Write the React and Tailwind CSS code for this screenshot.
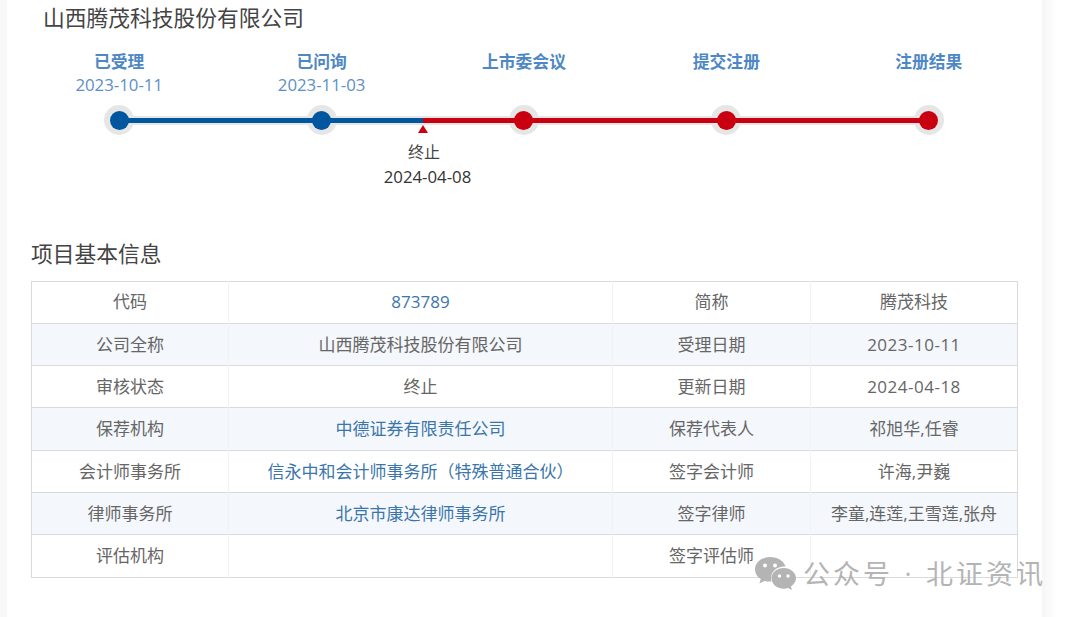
import React from "react";

const steps = [
  { label: "已受理", date: "2023-10-11", c: "bg-[#00569f]" },
  { label: "已问询", date: "2023-11-03", c: "bg-[#00569f]" },
  { label: "上市委会议", c: "bg-[#c90010]" },
  { label: "提交注册", c: "bg-[#c90010]" },
  { label: "注册结果", c: "bg-[#c90010]" },
];

const rows = [
  ["代码", "873789", "简称", "腾茂科技", true],
  ["公司全称", "山西腾茂科技股份有限公司", "受理日期", "2023-10-11", false],
  ["审核状态", "终止", "更新日期", "2024-04-18", false],
  ["保荐机构", "中德证券有限责任公司", "保荐代表人", "祁旭华,任睿", true],
  ["会计师事务所", "信永中和会计师事务所（特殊普通合伙）", "签字会计师", "许海,尹巍", true],
  ["律师事务所", "北京市康达律师事务所", "签字律师", "李童,连莲,王雪莲,张舟", true],
  ["评估机构", "", "签字评估师", "", false],
];

function WeChat() {
  return (
    <svg width="41" height="36" viewBox="0 0 41 36" className="shrink-0">
      <path fill="#b4b4b4" d="M15 1C7 1 0 6.500 0 13.400c0 4 2.200 7.200 5.800 9.700L4.400 27.500l5-2.600c1.800.4 3.300.7 5.600.7h1.500a11 11 0 0 1-.5-3.300c0-6.600 5.800-11.800 13-11.800h1.500C29 5 22.500 1 15 1z" />
      <path fill="#b4b4b4" d="M41 22.300c0-5.700-5.700-10.400-12.200-10.400-6.900 0-12.300 4.700-12.300 10.400 0 5.800 5.400 10.400 12.300 10.400 1.400 0 2.900-.4 4.300-.7l3.900 2.100-1.100-3.500c2.900-2.100 5.100-5 5.100-8.300z" />
      <circle cx="10" cy="9.500" r="2" fill="#fff" />
      <circle cx="20" cy="9.500" r="2" fill="#fff" />
      <circle cx="24.500" cy="20" r="1.700" fill="#fff" />
      <circle cx="33" cy="20" r="1.700" fill="#fff" />
    </svg>
  );
}

export default function App() {
  return (
    <div className="relative h-[617px] w-[1080px] overflow-hidden bg-white font-['Open_Sans','Noto_Sans_CJK_SC',sans-serif] text-[#555]">
      <div className="flex h-full">
        <div className="w-[7px] shrink-0 bg-[#f8f8f8]" />
        <main className="w-[1035px] shrink-0 pl-[24px]">
          <h1 className="pl-[12px] pt-[4px] text-[21.750px] font-normal leading-[28px] text-[#444]">山西腾茂科技股份有限公司</h1>

          <div className="relative -ml-[13px] mt-[18px] flex h-[154px] w-[1012px]">
            <div className="absolute left-[101px] top-[65.500px] h-[9px] w-[809px] bg-[#e6e6e6]" />
            {steps.map((s) => (
              <div key={s.label} className="relative flex w-[202.400px] flex-col items-center">
                <div className="text-[16.800px] font-bold leading-[24px] text-[#4e88c4]">{s.label}</div>
                <div className="h-[22px] text-[16.800px] leading-[22px] text-[#5d90c4]">{s.date}</div>
                <div className="mt-[9px] h-[30px] w-[30px] rounded-full bg-[#e6e6e6]" />
              </div>
            ))}
            <div className="absolute left-[101px] top-[67.500px] h-[5px] w-[304px] bg-[#00569f]" />
            <div className="absolute left-[405px] top-[67.500px] h-[5px] w-[505px] bg-[#c90010]" />
            <div className="absolute left-0 top-[60.500px] flex">
              {steps.map((s) => (
                <div key={s.label} className="flex w-[202.400px] justify-center">
                  <div className={`h-[19px] w-[19px] rounded-full ${s.c}`} />
                </div>
              ))}
            </div>
            <div className="absolute left-[345px] top-[75px] flex w-[120px] flex-col items-center">
              <div className="h-0 w-0 border-x-[5px] border-b-[8px] border-x-transparent border-b-[#c90010]" />
              <div className="ml-[2px] mt-[6px] text-[16px] leading-[26px] text-[#444]">终止</div>
              <div className="ml-[9px] text-[16.800px] leading-[24px] text-[#333]">2024-04-08</div>
            </div>
          </div>

          <h2 className="mt-[34px] text-[21.750px] font-normal leading-[32px] text-[#444]">项目基本信息</h2>

          <table className="mt-[10.600px] w-[986px] table-fixed border-collapse border border-[#d8dadc] text-center text-[17px] text-[#666]">
            <colgroup>
              <col className="w-[197px]" />
              <col className="w-[384px]" />
              <col className="w-[198px]" />
              <col className="w-[207px]" />
            </colgroup>
            <tbody>
              {rows.map((r, i) => (
                <tr key={r[0]} className={`h-[42.300px] border-b border-[#d8dadc] ${i % 2 === 1 ? "bg-[#f4f7fb]" : "bg-white"}`}>
                  <td className="border-r border-[#f2f2f2] p-0">{r[0]}</td>
                  <td className={`border-r border-[#f2f2f2] p-0 ${r[4] ? "text-[#3b76aa]" : ""}`}>{r[1]}</td>
                  <td className="border-r border-[#f2f2f2] p-0">{r[2]}</td>
                  <td className={`p-0 ${/^\d/.test(r[3]) ? "tracking-[0.500px]" : ""}`}>{r[3]}</td>
                </tr>
              ))}
            </tbody>
          </table>
        </main>
        <div className="flex-1 bg-gradient-to-r from-[#f6f6f6] to-white to-[40%]" />
      </div>

      <div className="absolute left-[755px] top-[556px] flex items-center gap-[7px] text-[27px] leading-[36px] text-[#b4b4b4]">
        <WeChat />
        <span className="whitespace-nowrap tracking-[3px] [word-spacing:1.500px]">公众号 · 北证资讯</span>
      </div>
    </div>
  );
}
